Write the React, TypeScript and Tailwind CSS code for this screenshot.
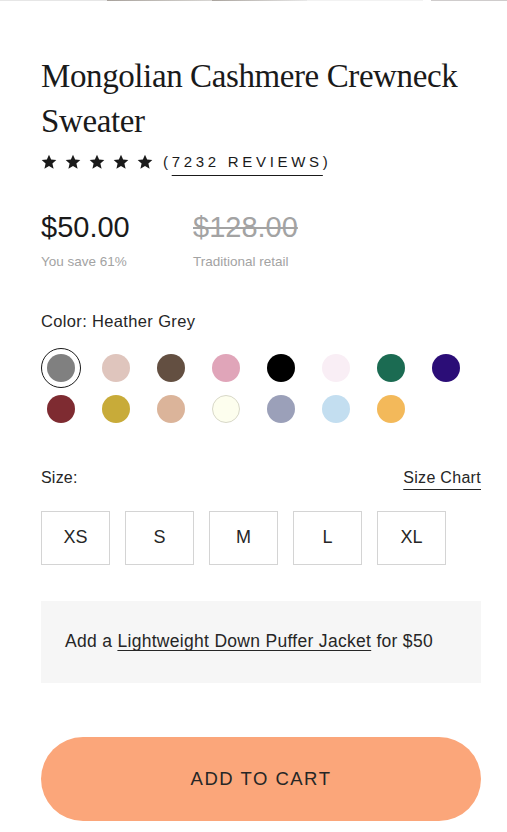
import React from "react";

const swatches = [
  "#808080", "#dfc5bd", "#634f41", "#e0a5b9", "#000000", "#f9eef5", "#1b6b52", "#2b0d77",
  "#7e2b31", "#c8ab39", "#dbb49a", "#fdfeee", "#9ba0b9", "#c3def0", "#f3b95a",
];

const sizes = ["XS", "S", "M", "L", "XL"];

function Star() {
  return (
    <svg width="16" height="16" viewBox="0 0 24 24" className="fill-[#1a1a1a]">
      <path d="M12 1l3.2 7.3 7.8.7-5.9 5.2 1.8 7.8L12 17.9 5.1 22l1.8-7.8L1 9l7.8-.7z" />
    </svg>
  );
}

export default function App() {
  return (
    <div className="w-[507px] min-h-[832px] bg-white font-['Liberation_Sans',Arial,sans-serif] text-[#262626]">
      {/* bottom edge of the image carousel */}
      <div className="flex h-px">
        <div className="w-[107px] bg-[#e6e6e6]" />
        <div className="w-[105px] bg-gradient-to-r from-[#a8a29c] to-[#d8d6d3]" />
        <div className="w-[95px] bg-gradient-to-r from-[#aaa49e] to-[#e8e8e8]" />
        <div className="w-[116px] bg-[#f2f2f2]" />
        <div className="w-[8px] bg-white" />
        <div className="flex-1 bg-[#cfcccc]" />
      </div>

      <div className="pl-[41px] pr-[26px]">
        <h1 className="mt-[53px] font-['Liberation_Serif',Georgia,serif] text-[33px] leading-[45px] tracking-[-0.4px] text-[#1a1a1a]">
          Mongolian Cashmere Crewneck Sweater
        </h1>

        <div className="mt-[7px] flex items-center">
          <div className="flex gap-[8px]">
            <Star />
            <Star />
            <Star />
            <Star />
            <Star />
          </div>
          <span className="ml-[10px] text-[15px] tracking-[3.7px] text-[#1a1a1a]">
            (<span className="underline decoration-[#1a1a1a] decoration-1 underline-offset-[8px]">7232 REVIEWS</span>)
          </span>
        </div>

        <div className="mt-[36px] flex">
          <div className="w-[152px]">
            <div className="text-[29px] leading-[34px] text-[#1a1a1a]">$50.00</div>
            <div className="mt-[8px] text-[13.5px] text-[#a3a3a3]">You save 61%</div>
          </div>
          <div>
            <div className="text-[29px] leading-[34px] text-[#a3a3a3] line-through decoration-[#a3a3a3]">$128.00</div>
            <div className="mt-[8px] text-[13.5px] text-[#a3a3a3]">Traditional retail</div>
          </div>
        </div>

        <div className="mt-[37px] text-[16.5px] tracking-[0.35px] text-[#262626]">Color: Heather Grey</div>

        <div className="mt-[14px] grid grid-cols-[repeat(8,40px)] gap-x-[15px] gap-y-px">
          {swatches.map((c, i) => (
            <div
              key={c}
              className={`flex h-[40px] w-[40px] items-center justify-center rounded-full ${i === 0 ? "border border-[#1a1a1a]" : ""}`}
            >
              <div
                className={`h-[28px] w-[28px] rounded-full ${c === "#fdfeee" ? "border border-[#d8d8c8]" : ""}`}
                style={{ backgroundColor: c }}
              />
            </div>
          ))}
        </div>

        <div className="mt-[37px] flex items-center justify-between">
          <span className="text-[16px] tracking-[0.2px] text-[#262626]">Size:</span>
          <span className="text-[16px] tracking-[0.3px] text-[#262626] underline decoration-1 underline-offset-[6px]">Size Chart</span>
        </div>

        <div className="mt-[21px] flex gap-[15px]">
          {sizes.map((s) => (
            <div
              key={s}
              className="flex h-[54px] w-[69px] items-center justify-center border border-[#d4d4d4] text-[18px] text-[#262626]"
            >
              {s}
            </div>
          ))}
        </div>

        <div className="mt-[36px] flex h-[82px] items-center bg-[#f6f6f6] pl-[24px] text-[17.5px] tracking-[0.3px] text-[#262626]">
          <span>
            Add a <span className="underline decoration-1 underline-offset-[3px]">Lightweight Down Puffer Jacket</span> for $50
          </span>
        </div>

        <button className="mt-[54px] flex h-[84px] w-full items-center justify-center rounded-full bg-[#fba67a] text-[18.5px] tracking-[1.5px] text-[#262626]">
          ADD TO CART
        </button>
      </div>
    </div>
  );
}
